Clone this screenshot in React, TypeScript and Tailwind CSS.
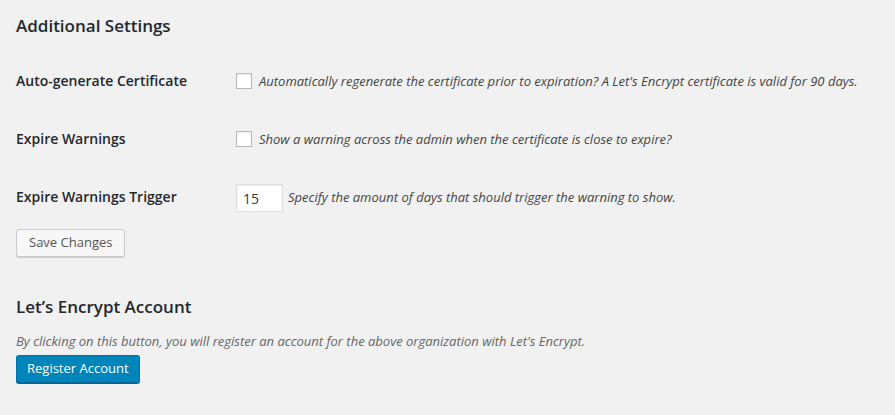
export default function App() {
  const rows = [
    {
      label: "Auto-generate Certificate",
      kind: "checkbox",
      text: "Automatically regenerate the certificate prior to expiration? A Let's Encrypt certificate is valid for 90 days.",
    },
    {
      label: "Expire Warnings",
      kind: "checkbox",
      text: "Show a warning across the admin when the certificate is close to expire?",
    },
    {
      label: "Expire Warnings Trigger",
      kind: "number",
      text: "Specify the amount of days that should trigger the warning to show.",
    },
  ];

  return (
    <div className="min-h-[415px] bg-[#f1f1f1] px-4 text-[#23282d] font-['Open_Sans',sans-serif]">
      <h2 className="pt-[14px] text-[17px] leading-[23px] font-semibold">Additional Settings</h2>

      <div className="mt-[15px]">
        {rows.map((r) => (
          <div key={r.label} className="flex h-[58px] items-center">
            <div className="w-[220px] shrink-0 text-[14px] font-semibold leading-[20px]">{r.label}</div>
            {r.kind === "checkbox" ? (
              <div className="flex items-center gap-[7px]">
                <input
                  type="checkbox"
                  className="m-0 h-4 w-4 appearance-none border border-[#b4b9be] bg-white shadow-[inset_0_1px_2px_rgba(0,0,0,0.07)]"
                />
                <span className="text-[13px] italic leading-[20px] text-[#444]">{r.text}</span>
              </div>
            ) : (
              <div className="flex items-center gap-[5px]">
                <input
                  type="text"
                  defaultValue="15"
                  className="mt-[2px] h-[28px] w-[47px] border border-[#ddd] bg-white pl-[6px] text-[14px] text-[#32373c] shadow-[inset_0_1px_2px_rgba(0,0,0,0.07)] outline-none"
                />
                <span className="text-[13px] italic leading-[20px] text-[#444]">{r.text}</span>
              </div>
            )}
          </div>
        ))}
      </div>

      <button className="mt-[3px] h-[28px] rounded-[3px] border border-[#ccc] bg-[#f7f7f7] px-[12px] pb-px text-[13px] text-[#555] shadow-[0_1px_0_#ccc]">
        Save Changes
      </button>

      <h2 className="mt-[38px] text-[17px] leading-[23px] font-semibold">Let’s Encrypt Account</h2>
      <p className="mt-[13px] text-[13px] italic leading-[20px] text-[#666]">
        By clicking on this button, you will register an account for the above organization with Let's Encrypt.
      </p>
      <button className="mt-[4px] h-[28px] rounded-[3px] border border-[#0073aa] border-b-[#006799] bg-[#0085ba] px-[10px] pb-px text-[13px] text-white shadow-[0_1px_0_#006799]">
        Register Account
      </button>
    </div>
  );
}
